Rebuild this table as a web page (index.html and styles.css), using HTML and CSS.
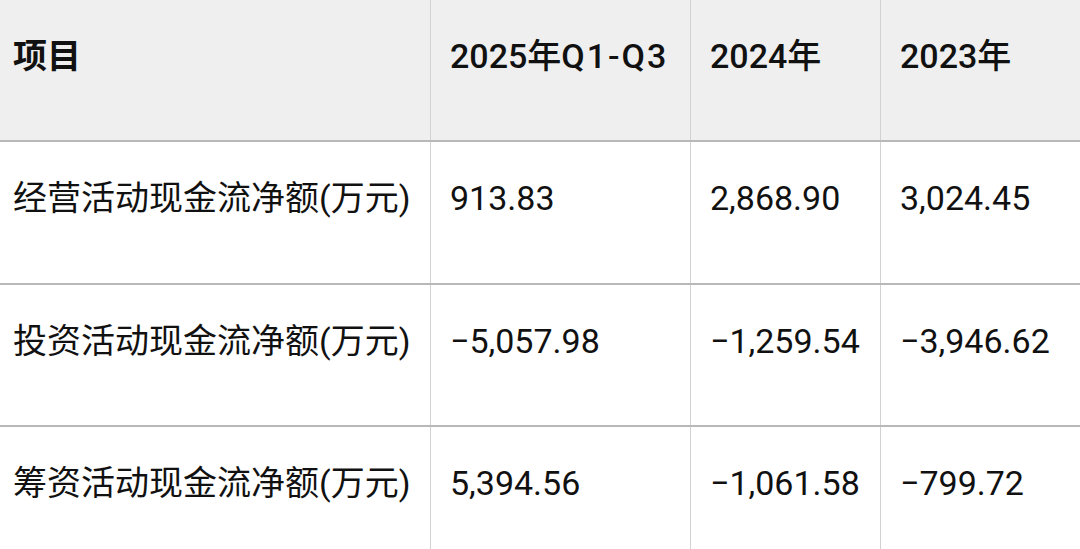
FILE: index.html
```html
<!DOCTYPE html>
<html lang="zh-CN">
<head>
<meta charset="utf-8">
<link rel="stylesheet" href="styles.css">
</head>
<body>
<div class="table">
  <div class="row head">
    <div class="cell first bold">项目</div>
    <div class="cell">2025年<span class="q">Q1-Q3</span></div>
    <div class="cell">2024年</div>
    <div class="cell">2023年</div>
  </div>
  <div class="row r1">
    <div class="cell first">经营活动现金流净额(万元)</div>
    <div class="cell">913.83</div>
    <div class="cell">2,868.90</div>
    <div class="cell">3,024.45</div>
  </div>
  <div class="row r2">
    <div class="cell first">投资活动现金流净额(万元)</div>
    <div class="cell">−5,057.98</div>
    <div class="cell">−1,259.54</div>
    <div class="cell">−3,946.62</div>
  </div>
  <div class="row r3">
    <div class="cell first">筹资活动现金流净额(万元)</div>
    <div class="cell">5,394.56</div>
    <div class="cell">−1,061.58</div>
    <div class="cell">−799.72</div>
  </div>
</div>
</body>
</html>
```
FILE: styles.css
```css
html, body {
  margin: 0;
  padding: 0;
  background: #ffffff;
}
body {
  width: 1080px;
  height: 549px;
  overflow: hidden;
  font-family: Roboto, "Noto Sans CJK SC", sans-serif;
  color: #111111;
}
.table {
  display: flex;
  flex-direction: column;
}
.row {
  display: grid;
  grid-template-columns: 430px 260px 190px 200px;
  box-sizing: border-box;
  border-bottom: 2px solid #b8b8b8;
  height: 142px;
}
.row.r1 { height: 143px; }
.row.r3 { height: 130px; border-bottom: none; }
.head {
  background: #efefef;
  font-weight: 500;
}
.cell {
  box-sizing: border-box;
  border-left: 1px solid #d2d2d2;
  padding: 36px 0 0 19px;
  font-size: 34px;
  line-height: 40px;
  white-space: nowrap;
}
.cell.first {
  border-left: none;
  padding-left: 13px;
}
.bold {
  font-weight: 700;
}
.q {
  letter-spacing: 2px;
}
```
